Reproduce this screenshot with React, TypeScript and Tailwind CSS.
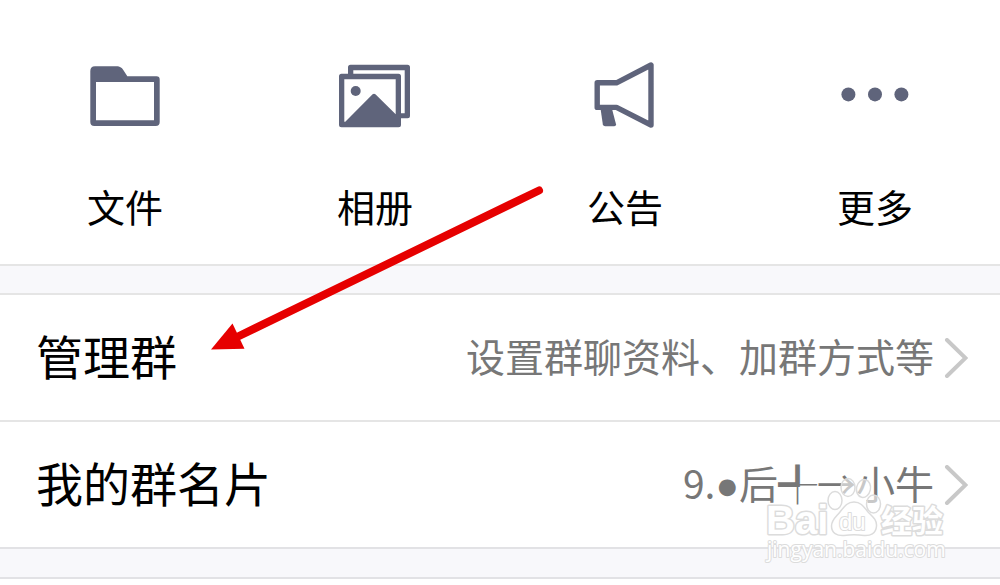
import React from 'react';

interface Action {
  label: string;
  icon: React.ReactNode;
}

interface SettingRow {
  title: string;
  value: React.ReactNode;
}

const FolderIcon = () => (
  <svg viewBox="0 0 80 80" className="h-20 w-20" fill="currentColor" aria-hidden="true">
    <path
      fillRule="evenodd"
      d="M10 11.3H31C35.5 11.3 37 13 38.8 15.8L42.3 21.3H71.5Q74.7 21.3 74.7 24.5V67Q74.7 71 70.7 71H9.3Q5.3 71 5.3 67V16Q5.3 11.3 10 11.3ZM11 27V65.3H69V27Z"
    />
  </svg>
);

const AlbumIcon = () => (
  <svg viewBox="0 0 80 80" className="h-20 w-20" fill="currentColor" aria-hidden="true">
    <path
      fillRule="evenodd"
      d="M15.5 9.7H72.5Q75 9.7 75 12.2V60.8Q75 63.3 72.5 63.3H64V58.3H69.7V15.3H18.3V21H13V12.2Q13 9.7 15.5 9.7Z"
    />
    <path
      fillRule="evenodd"
      d="M6.5 18.7H63.5Q66 18.7 66 21.2V69.8Q66 72.3 63.5 72.3H6.5Q4 72.3 4 69.8V21.2Q4 18.7 6.5 18.7ZM9.3 24.3V66.8H10.3L37.6 39.3Q39 38.1 40.4 39.3L60.7 59.3V24.3Z"
    />
    <circle cx="20.7" cy="36" r="5" />
  </svg>
);

const NoticeIcon = () => (
  <svg viewBox="0 0 80 80" className="h-20 w-20" aria-hidden="true">
    <path
      d="M12.2 27.8H31.5L66 10V70L31.5 52.4H12.2Z"
      fill="none"
      stroke="currentColor"
      strokeWidth="5.4"
      strokeLinejoin="round"
    />
    <path
      d="M15.3 52H26.5L31 69.2Q31.2 71.3 29.2 71.3H20.2Q18.2 71.3 17.8 69.2Z"
      fill="currentColor"
    />
  </svg>
);

const MoreIcon = () => (
  <svg viewBox="0 0 80 80" className="h-20 w-20" fill="currentColor" aria-hidden="true">
    <circle cx="13.4" cy="39.4" r="7" />
    <circle cx="40" cy="39.4" r="7" />
    <circle cx="66.4" cy="39.4" r="7" />
  </svg>
);

const ChevronIcon = () => (
  <svg
    viewBox="0 0 24 40"
    className="h-10 w-6 shrink-0"
    fill="none"
    stroke="#c8c8c8"
    strokeWidth="4"
    strokeLinecap="round"
    aria-hidden="true"
  >
    <path d="M3 2L21.5 20L3 38" />
  </svg>
);

const actions: Action[] = [
  { label: '文件', icon: <FolderIcon /> },
  { label: '相册', icon: <AlbumIcon /> },
  { label: '公告', icon: <NoticeIcon /> },
  { label: '更多', icon: <MoreIcon /> },
];

const rows: SettingRow[] = [
  { title: '管理群', value: '设置群聊资料、加群方式等' },
  {
    title: '我的群名片',
    value: (
      <>
        9.<span className="font-['Liberation_Sans',sans-serif] leading-none">●</span>后╃→小牛
      </>
    ),
  },
];

// Flecha roja que señala "管理群"
const PointerArrow = () => (
  <svg
    viewBox="0 0 340 170"
    className="pointer-events-none absolute left-[206px] top-[184px] h-[170px] w-[340px]"
    aria-hidden="true"
  >
    <path d="M333 6.5L30 153.500" stroke="#e60000" strokeWidth="8" strokeLinecap="round" />
    <path d="M5 165.500L26.500 139.500L38.500 164.800Z" fill="#e60000" />
  </svg>
);

const Watermark = () => (
  <svg
    viewBox="0 0 190 94"
    className="pointer-events-none absolute right-[50px] top-[474px] h-[94px] w-[190px]"
    fill="#ffffff"
    stroke="#dcdcdc"
    strokeLinejoin="round"
    aria-hidden="true"
  >
    <g fillOpacity="0.6" strokeWidth="1.5">
      <ellipse cx="75" cy="26.500" rx="7" ry="9" />
      <ellipse cx="88" cy="13.500" rx="7" ry="9" />
      <ellipse cx="103.500" cy="14.500" rx="7" ry="9" transform="rotate(12 103.5 14.5)" />
      <ellipse cx="113.500" cy="30" rx="7" ry="9" />
      <path
        fillOpacity="0.9"
        d="M94 28C101 28 104 33 108 38C113 43 117 46 116.500 52C116 60 110 62 104 61.500C97 60.500 91 60.500 84 61.500C77 62 71.500 59 71.500 52C71.500 46 76 43 80 38C84 33 87 28 94 28Z"
      />
    </g>
    <g strokeWidth="3" paintOrder="stroke">
      <text x="6" y="60" fontSize="40" fontWeight="700" fontFamily="'Liberation Sans', Arial, sans-serif">Bai</text>
      <text x="79" y="56" fontSize="24" strokeWidth="2" fontFamily="'Liberation Sans', Arial, sans-serif">du</text>
      <text x="121" y="58" fontSize="31" fontWeight="700" fontFamily="'Noto Sans CJK SC', sans-serif">经验</text>
      <text x="7" y="83" fontSize="21" strokeWidth="2" fontFamily="'Open Sans', sans-serif">jingyan.baidu.com</text>
    </g>
  </svg>
);

const App: React.FC = () => {
  return (
    <main className="relative min-h-screen overflow-hidden bg-white font-['Noto_Sans_CJK_SC',sans-serif] text-black">
      <section className="grid grid-cols-4 pt-[55px] pb-8">
        {actions.map((action) => (
          <button key={action.label} type="button" className="flex flex-col items-center gap-11">
            <span className="text-[#5f647b]">{action.icon}</span>
            <span className="text-[38px] leading-[53px]">{action.label}</span>
          </button>
        ))}
      </section>

      <div className="h-[31px] border-y-2 border-[#e5e5e5] bg-[#f8f8fb]" />

      <section className="divide-y-2 divide-[#e5e5e5]">
        {rows.map((row) => (
          <button
            key={row.title}
            type="button"
            className="flex w-full items-center justify-between py-8 pl-9 pr-8 leading-[56px]"
          >
            <span className="pb-[5px] text-[47px]">{row.title}</span>
            <span className="flex items-center gap-[10px] text-[39px] text-[#777777]">
              <span className="pb-[5px]">{row.value}</span>
              <ChevronIcon />
            </span>
          </button>
        ))}
      </section>

      <div className="h-8 border-y-2 border-[#e2e2e5] bg-[#f8f8fb]" />

      <PointerArrow />
      <Watermark />
    </main>
  );
};

export default App;
